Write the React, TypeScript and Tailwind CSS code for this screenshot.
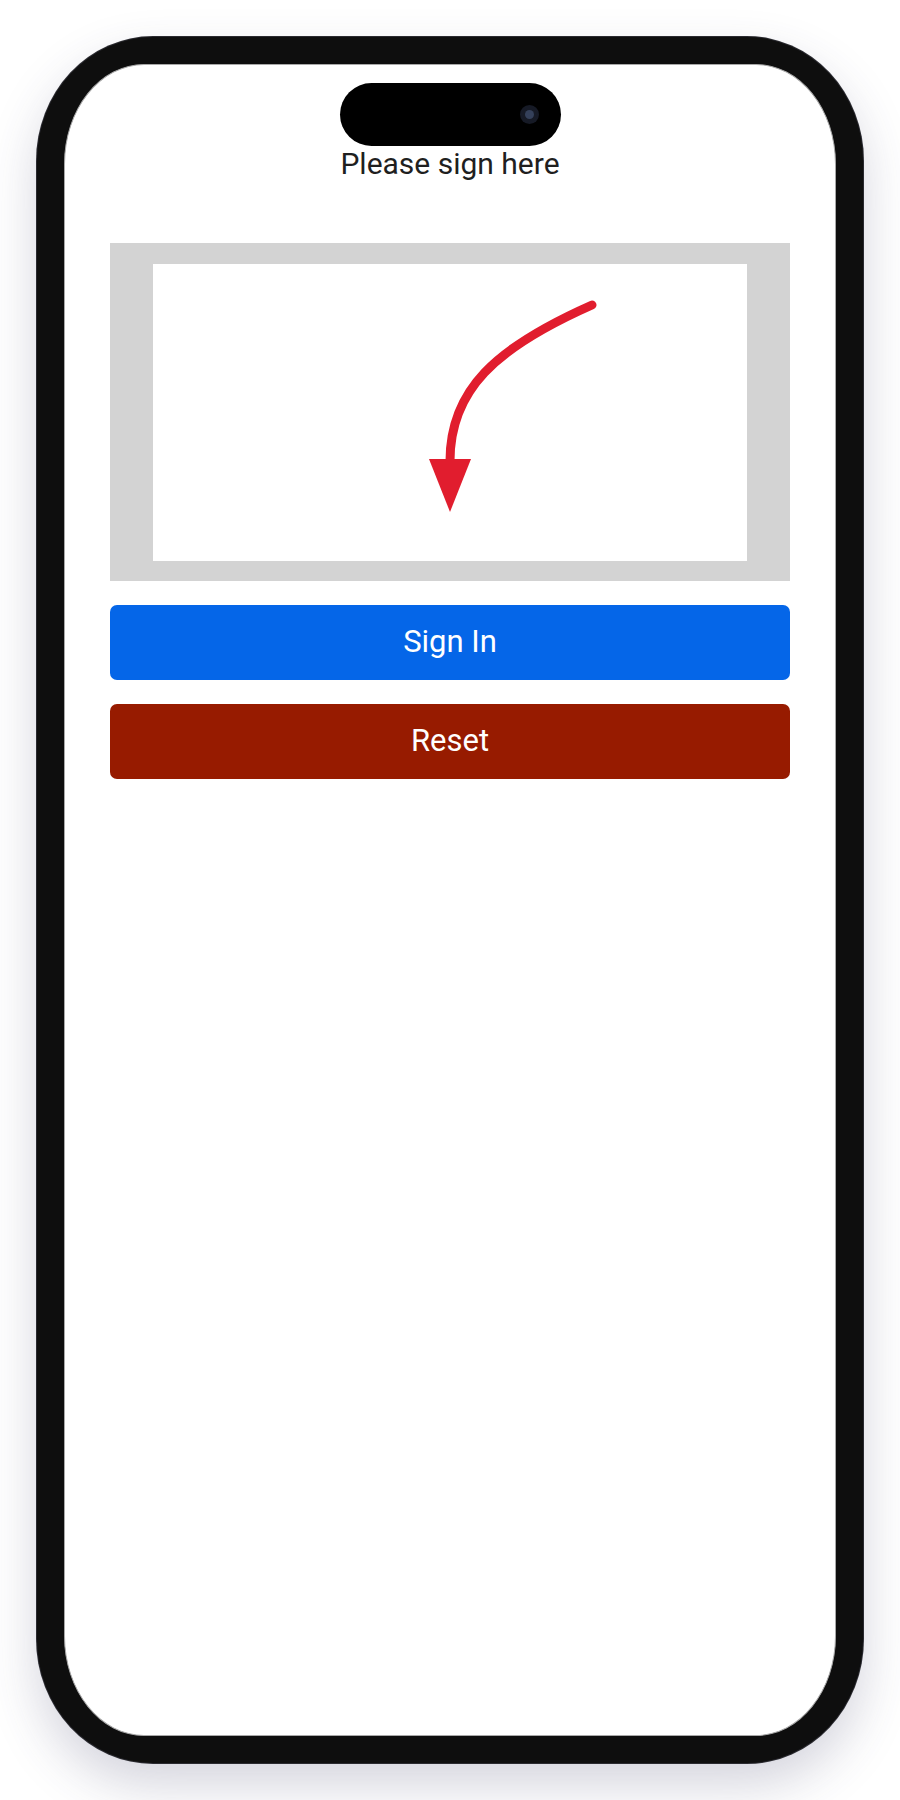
import React from "react";

function SignatureArrow() {
  return (
    <svg width="594" height="297" viewBox="0 0 594 297" className="block">
      <path
        d="M439 41 C 342 84 297 126 297 197"
        fill="none"
        stroke="#e11d2e"
        strokeWidth="9"
        strokeLinecap="round"
      />
      <polygon points="276,195 318,195 297,248" fill="#e11d2e" />
    </svg>
  );
}

export default function App() {
  return (
    <div className="w-[900px] min-h-[1800px] bg-white pt-[37px] pl-[37px] font-['Roboto',sans-serif]">
      <div className="w-[826px] h-[1726px] rounded-[116px_/_124px] bg-[#0e0e0e] p-[27px] shadow-[0_22px_50px_rgba(60,60,100,0.22)] ring-1 ring-[#2a2a30]">
        <div className="h-full rounded-[80px_/_100px] bg-white border-[1.5px] border-[#a8a8a8] flex flex-col items-center pt-[18px]">
          {/* dynamic island */}
          <div className="w-[221px] h-[63px] rounded-full bg-black flex items-center justify-end pr-[22px]">
            <div className="w-[19px] h-[19px] rounded-full bg-[#161a26] flex items-center justify-center">
              <div className="w-[9px] h-[9px] rounded-full bg-[#34405a]" />
            </div>
          </div>

          <div className="text-[30px] leading-[36px] text-[#1f1f1f]">Please sign here</div>

          <div className="mt-[61px] w-[680px] h-[338px] bg-[#d3d3d3] pt-[21px] flex justify-center">
            <div className="w-[594px] h-[297px] bg-white">
              <SignatureArrow />
            </div>
          </div>

          <button className="mt-[24px] w-[680px] h-[75px] rounded-[7px] bg-[#0566e8] text-white text-[31px]">
            Sign In
          </button>
          <button className="mt-[24px] w-[680px] h-[75px] rounded-[7px] bg-[#971b00] text-white text-[31px]">
            Reset
          </button>
        </div>
      </div>
    </div>
  );
}
